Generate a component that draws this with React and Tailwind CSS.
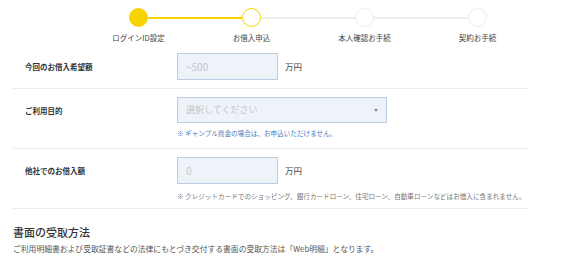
const font = { fontFamily: '"Noto Sans CJK JP", "Noto Sans", sans-serif' };

const steps = [
  { label: "ログインID設定", state: "done" },
  { label: "お借入申込", state: "current" },
  { label: "本人確認お手続", state: "todo" },
  { label: "契約お手続", state: "todo" },
];

function Step({ label, state, first, last, leftOn, rightOn }) {
  const circle =
    state === "done"
      ? "bg-[#f7d400] border-[#f7d400]"
      : state === "current"
      ? "bg-white border-[#f7d400]"
      : "bg-white border-[#ececec]";
  return (
    <div className="flex w-[113px] flex-col items-center">
      <div className="flex w-full items-center">
        <div
          className={
            "h-[2px] flex-1 " +
            (first ? "bg-transparent" : leftOn ? "bg-[#f7d400]" : "bg-[#eeeeee]")
          }
        />
        <div className={"h-[19px] w-[19px] rounded-full border-[1.5px] " + circle} />
        <div
          className={
            "h-[2px] flex-1 " +
            (last ? "bg-transparent" : rightOn ? "bg-[#f7d400]" : "bg-[#eeeeee]")
          }
        />
      </div>
      <div className="mt-[6px] text-[7.5px] leading-[10px] text-[#444]">{label}</div>
    </div>
  );
}

function Row({ label, children, note, noteClass, pb }) {
  return (
    <div className={"flex border-b border-[#ececec] pt-2 " + pb}>
      <div className="flex h-[27px] w-[164px] shrink-0 items-center pl-3 text-[7.5px] font-bold text-[#333]">
        {label}
      </div>
      <div className="flex flex-col">
        {children}
        {note && <div className={"text-[6.6px] leading-[10px] " + noteClass}>{note}</div>}
      </div>
    </div>
  );
}

function AmountInput({ placeholder }) {
  return (
    <div className="flex items-center">
      <div className="flex h-[27px] w-[101px] items-center border border-[#bccde4] bg-[#eef3fa] px-[8px] text-[10px] text-[#c2c6cc]">
        {placeholder}
      </div>
      <span className="ml-[7px] text-[8.5px] text-[#444]">万円</span>
    </div>
  );
}

export default function App() {
  return (
    <div className="h-[260px] w-[570px] overflow-hidden bg-white" style={font}>
      <div className="flex h-[45px] pl-[82px] pt-[8px]">
        {steps.map((s, i) => (
          <Step
            key={s.label}
            {...s}
            first={i === 0}
            last={i === steps.length - 1}
            leftOn={i <= 1}
            rightOn={i < 1}
          />
        ))}
      </div>

      <div className="mx-[13px] w-[515px]">
        <Row label="今回のお借入希望額" pb="pb-2">
          <AmountInput placeholder="~500" />
        </Row>

        <Row
          label="ご利用目的"
          pb="pb-[10px]"
          note="※ ギャンブル資金の場合は、お申込いただけません。"
          noteClass="mt-[5px] text-[#4a7bbd]"
        >
          <div className="flex h-[26px] w-[210px] items-center justify-between border border-[#bccde4] bg-[#eef3fa] pl-[8px] pr-[8px] text-[9px] text-[#bfc3ca]">
            <span>選択してください</span>
            <span className="h-0 w-0 border-x-[2.5px] border-t-[3px] border-x-transparent border-t-[#888]" />
          </div>
        </Row>

        <Row
          label="他社でのお借入額"
          pb="pb-[7px]"
          note="※ クレジットカードでのショッピング、銀行カードローン、住宅ローン、自動車ローンなどはお借入に含まれません。"
          noteClass="mt-[7px] text-[#777] whitespace-nowrap"
        >
          <AmountInput placeholder="0" />
        </Row>

        <h2 className="mt-[15px] text-[11px] font-medium leading-[16px] text-[#333]">
          書面の受取方法
        </h2>
        <p className="mt-[3px] text-[7.8px] leading-[11px] text-[#555]">
          ご利用明細書および受取証書などの法律にもとづき交付する書面の受取方法は「Web明細」となります。
        </p>
      </div>
    </div>
  );
}
